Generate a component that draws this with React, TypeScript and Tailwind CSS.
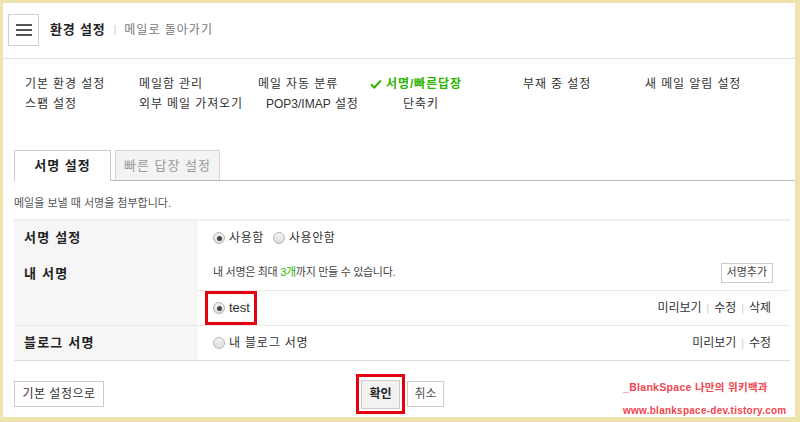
import React from "react";

const font = { fontFamily: '"Liberation Sans", "Noto Sans CJK KR", sans-serif' };

function Radio({ checked }: { checked?: boolean }) {
  return (
    <span className="inline-flex items-center justify-center w-[12px] h-[12px] rounded-full border border-[#b5b5b5] bg-gradient-to-b from-[#f4f4f4] to-[#dcdcdc] mr-[4px]">
      {checked && <span className="w-[5px] h-[5px] rounded-full bg-[#444]" />}
    </span>
  );
}

function Sep() {
  return <span className="text-[#ccc] mx-[5px] text-[10px]">|</span>;
}

export default function App() {
  const row1: [string, number, boolean?][] = [
    ["기본 환경 설정", 114],
    ["메일함 관리", 119],
    ["메일 자동 분류", 112],
    ["서명/빠른답장", 153, true],
    ["부재 중 설정", 122],
    ["새 메일 알림 설정", 120],
  ];
  return (
    <div className="w-[800px] h-[422px] bg-[#efe4ad] pt-[3px] pl-[3px] pr-[5px] pb-[5px]" style={font}>
      <div className="relative w-full h-full bg-white text-[12px] text-[#333] overflow-hidden">
        {/* Header */}
        <div className="h-[56px] border-b border-[#e3e3e3] flex items-center pl-[5px] pb-[2px]">
          <div className="w-[31px] h-[32px] border border-[#cfcfcf] flex flex-col items-center justify-center gap-[3px]">
            <span className="block w-[16px] h-[2px] bg-[#555]" />
            <span className="block w-[16px] h-[2px] bg-[#555]" />
            <span className="block w-[16px] h-[2px] bg-[#555]" />
          </div>
          <span className="ml-[11px] font-bold text-[13px] text-[#222] tracking-[0.8px]">환경 설정</span>
          <span className="mx-[8px] text-[#ccc] text-[11px]">|</span>
          <span className="text-[12px] text-[#777] tracking-[1px]">메일로 돌아가기</span>
        </div>

        {/* Nav */}
        <div className="pl-[22px] pt-[15px] leading-[20px] tracking-[0.9px]">
          <div className="flex">
            {row1.map(([t, w, active]) => (
              <div key={t} style={{ width: w }} className={active ? "text-[#2db400] font-bold flex items-center" : ""}>
                {active && (
                  <svg width="12" height="10" viewBox="0 0 12 10" className="mr-[4px]">
                    <path d="M1 5.5 L4.3 8.5 L11 1.5" stroke="#2db400" strokeWidth="2" fill="none" />
                  </svg>
                )}
                {t}
              </div>
            ))}
          </div>
          <div className="flex">
            <div className="w-[114px]">스팸 설정</div>
            <div className="w-[127px]">외부 메일 가져오기</div>
            <div className="w-[137px]">
              <span className="tracking-normal">POP3/IMAP</span> 설정
            </div>
            <div className="w-[100px]">단축키</div>
          </div>
        </div>

        {/* Tabs */}
        <div className="ml-[11px] mt-[36px] flex items-end border-b border-[#bbb] h-[31px]">
          <div className="w-[97px] h-[31px] border border-[#ccc] border-b-0 bg-white -mb-px flex items-center justify-center font-bold text-[13px] text-[#222] relative z-10 tracking-[1px]">
            서명 설정
          </div>
          <div className="ml-[4px] w-[105px] h-[30px] border border-[#d5d5d5] border-b-0 bg-[#f3f3f3] flex items-center justify-center text-[13px] text-[#999] tracking-[1px]">
            빠른 답장 설정
          </div>
        </div>

        <div className="ml-[11px] mr-[5px]">
          <div className="mt-[15px] text-[11px] text-[#555] leading-[14px]">메일을 보낼 때 서명을 첨부합니다.</div>

          {/* Table */}
          <div className="mt-[9px] border-t-2 border-[#eee] border-b border-b-[#dcdcdc] flex flex-col">
            <div className="flex h-[34px]">
              <div className="w-[184px] bg-[#f6f6f6] pl-[10px] flex items-center font-bold text-[13px] tracking-[1.2px] text-[#222]">서명 설정</div>
              <div className="flex-1 flex items-center pl-[15px] tracking-[0.6px]">
                <Radio checked />
                <span>사용함</span>
                <span className="ml-[9px]" />
                <Radio />
                <span>사용안함</span>
              </div>
            </div>
            <div className="flex">
              <div className="w-[184px] bg-[#f6f6f6] pl-[10px] pt-[9px] font-bold text-[13px] tracking-[1.2px] text-[#222]">내 서명</div>
              <div className="flex-1 flex flex-col">
                <div className="h-[36px] border-b border-[#e8e8e8] flex items-center pl-[15px] pr-[17px] text-[11px] text-[#444]">
                  <span className="tracking-[-0.3px]">
                    내 서명은 최대 <span className="text-[#2db400]">3개</span>까지 만들 수 있습니다.
                  </span>
                  <span className="ml-auto h-[20px] px-[5px] border border-[#ccc] flex items-center text-[11px] text-[#444]">서명추가</span>
                </div>
                <div className="h-[34px] flex items-center pl-[7px] pr-[19px]">
                  <span className="h-[34px] w-[52px] border-[3px] border-[#e60012] flex items-center pl-[5px]">
                    <Radio checked />
                    <span className="text-[13px]">test</span>
                  </span>
                  <span className="ml-auto text-[#333]">
                    미리보기<Sep />수정<Sep />삭제
                  </span>
                </div>
              </div>
            </div>
            <div className="flex h-[35px] border-t border-[#e8e8e8]">
              <div className="w-[184px] bg-[#f6f6f6] pl-[10px] flex items-center font-bold text-[13px] tracking-[1.2px] text-[#222]">블로그 서명</div>
              <div className="flex-1 flex items-center pl-[15px] pr-[19px]">
                <Radio />
                <span className="tracking-[0.8px]">내 블로그 서명</span>
                <span className="ml-auto">
                  미리보기<Sep />수정
                </span>
              </div>
            </div>
          </div>

          {/* Footer */}
          <div className="relative mt-[13px] h-[40px] flex items-center">
            <span className="h-[26px] w-[90px] border border-[#ccc] flex items-center justify-center text-[#333] tracking-[0.5px]">기본 설정으로</span>
            <div className="absolute left-[342px] top-0 flex items-center">
              <span className="border-[3px] border-[#e60012] p-[2px] h-[40px] w-[49px] flex items-center justify-center">
                <span className="w-[39px] h-[29px] border border-[#ccc] bg-[#f2f2f2] flex items-center justify-center font-bold text-[#222]">확인</span>
              </span>
              <span className="ml-[2px] h-[26px] w-[37px] border border-[#ccc] flex items-center justify-center text-[#555]">취소</span>
            </div>
          </div>
        </div>

        {/* Watermark */}
        <div className="absolute left-[620px] top-[372px] text-[#f0464f] font-bold leading-[24px]">
          <div className="text-[10.5px] tracking-[0.3px]">_BlankSpace 나만의 위키백과</div>
          <div className="text-[10px] tracking-[0.25px]">www.blankspace-dev.tistory.com</div>
        </div>
      </div>
    </div>
  );
}
